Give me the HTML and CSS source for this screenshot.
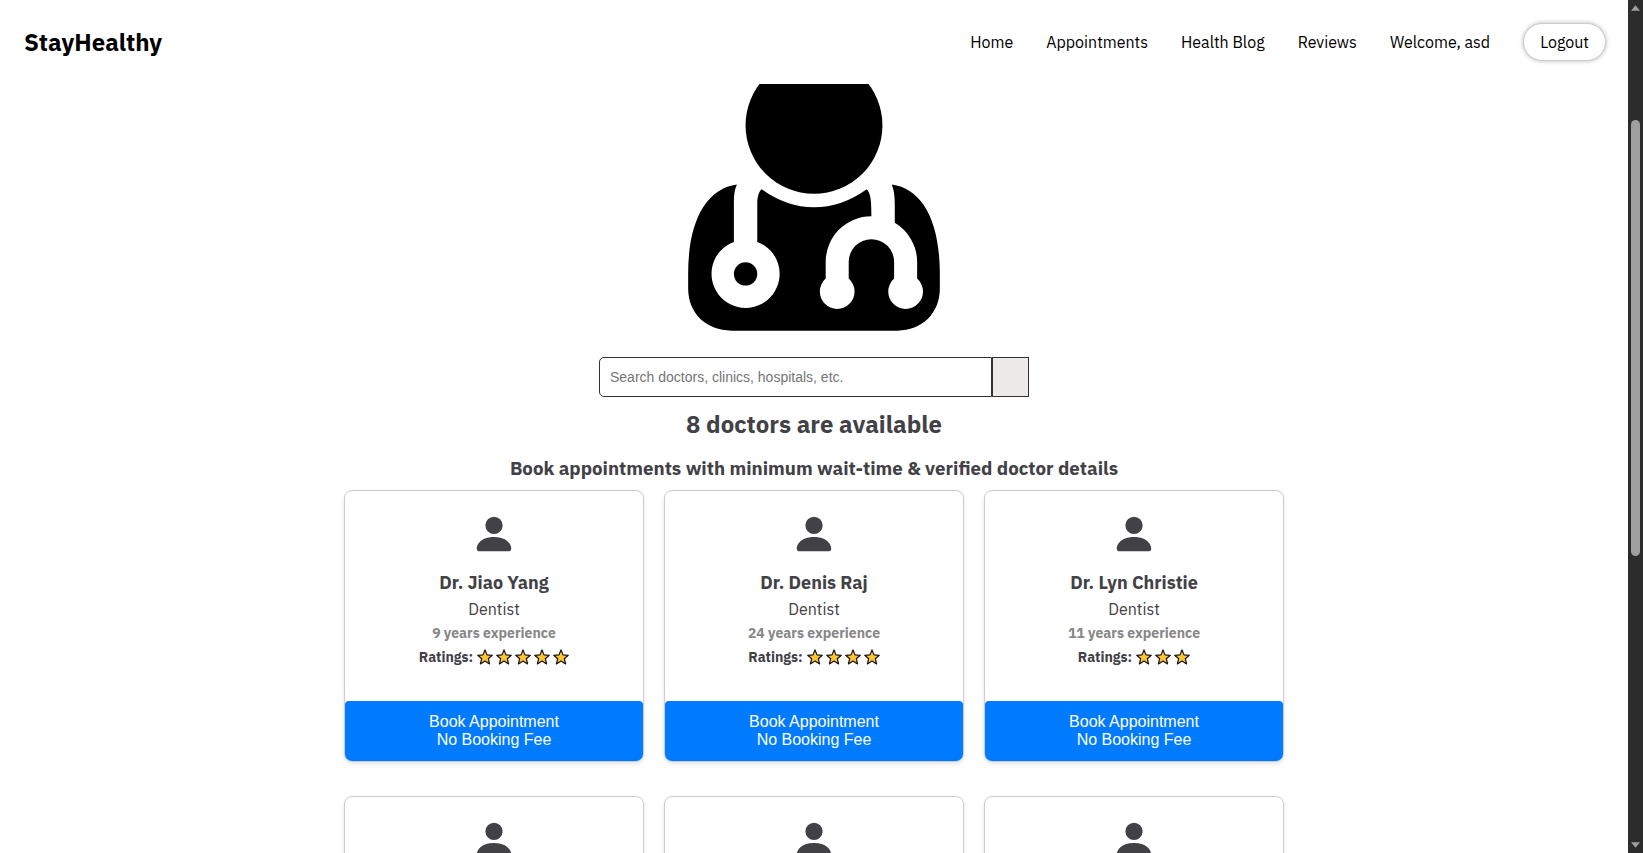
FILE: index.html
```html
<!DOCTYPE html>
<html lang="en">
<head>
<meta charset="utf-8">
<title>StayHealthy</title>
<link rel="stylesheet" href="styles.css">
</head>
<body>
<svg class="defs" aria-hidden="true">
  <symbol id="person" viewBox="0 0 16 16"><path d="M3 14s-1 0-1-1 1-4 6-4 6 3 6 4-1 1-1 1zm5-6a3 3 0 1 0 0-6 3 3 0 0 0 0 6"/></symbol>
  <symbol id="star" viewBox="0 0 16 16"><path d="M8 .9 10 5.900l5.300.400-4 3.400 1.300 5.200L8 12.100l-4.600 2.800 1.300-5.200-4-3.400L6 5.900z" fill="#ffc532" stroke="#111" stroke-width="1.200" stroke-linejoin="round"/></symbol>
</svg>
<div class="page">
  <header class="header">
    <a class="logo" href="#">StayHealthy</a>
    <nav class="nav">
      <a href="#">Home</a>
      <a href="#">Appointments</a>
      <a href="#">Health Blog</a>
      <a href="#">Reviews</a>
      <span>Welcome, asd</span>
      <button class="logout" type="button">Logout</button>
    </nav>
  </header>
  <main class="main">
    <svg class="doctor" viewBox="85 42 754 740" role="img" aria-label="Doctor">
      <circle cx="462" cy="166" r="205"/>
      <path d="M695 343C785 355 839 450 839 610V655C839 730 785 781 712 781H215C140 781 85 730 85 655V610C85 450 141 355 231 343C223 360 222 380 222 405V515A102 102 0 1 0 292 515V400C292 380 297 363 305 357Q380 411 462 411Q545 411 620 357C631 370 634 385 634 438A137 137 0 0 0 497 575V625A52 52 0 1 0 566 625V575A68 68 0 0 1 702 575V625A52 52 0 1 0 771 625V575A137 137 0 0 0 704 458V405C704 380 702 360 695 343Z"/>
      <circle cx="257" cy="611" r="35"/>
    </svg>
    <form class="search">
      <input class="search-input" type="text" aria-label="Search doctors" placeholder="Search doctors, clinics, hospitals, etc.">
      <button class="search-button" type="button" aria-label="Search"></button>
    </form>
    <h2 class="count">8 doctors are available</h2>
    <h3 class="tagline">Book appointments with minimum wait-time &amp; verified doctor details</h3>
    <div class="cards">
      <article class="card">
        <svg class="person"><use href="#person"/></svg>
        <h4 class="name">Dr. Jiao Yang</h4>
        <p class="specialty">Dentist</p>
        <p class="experience">9 years experience</p>
        <p class="ratings">Ratings: <span class="stars"><svg><use href="#star"/></svg><svg><use href="#star"/></svg><svg><use href="#star"/></svg><svg><use href="#star"/></svg><svg><use href="#star"/></svg></span></p>
        <button class="book" type="button"><span>Book Appointment</span><span>No Booking Fee</span></button>
      </article>
      <article class="card">
        <svg class="person"><use href="#person"/></svg>
        <h4 class="name">Dr. Denis Raj</h4>
        <p class="specialty">Dentist</p>
        <p class="experience">24 years experience</p>
        <p class="ratings">Ratings: <span class="stars"><svg><use href="#star"/></svg><svg><use href="#star"/></svg><svg><use href="#star"/></svg><svg><use href="#star"/></svg></span></p>
        <button class="book" type="button"><span>Book Appointment</span><span>No Booking Fee</span></button>
      </article>
      <article class="card">
        <svg class="person"><use href="#person"/></svg>
        <h4 class="name">Dr. Lyn Christie</h4>
        <p class="specialty">Dentist</p>
        <p class="experience">11 years experience</p>
        <p class="ratings">Ratings: <span class="stars"><svg><use href="#star"/></svg><svg><use href="#star"/></svg><svg><use href="#star"/></svg></span></p>
        <button class="book" type="button"><span>Book Appointment</span><span>No Booking Fee</span></button>
      </article>
      <article class="card"><svg class="person"><use href="#person"/></svg></article>
      <article class="card"><svg class="person"><use href="#person"/></svg></article>
      <article class="card"><svg class="person"><use href="#person"/></svg></article>
    </div>
  </main>
</div>
<div class="scrollbar" aria-hidden="true">
  <svg class="arrow" viewBox="0 0 10 6"><path d="M5 0 10 6H0z"/></svg>
  <div class="track"><div class="thumb"></div></div>
  <svg class="arrow" viewBox="0 0 10 6"><path d="M0 0h10L5 6z"/></svg>
</div>
</body>
</html>
```
FILE: styles.css
```css
* { box-sizing: border-box; }

body {
  margin: 0;
  height: 100vh;
  overflow: hidden;
  display: flex;
  background: #fff;
  color: #414146;
  font-family: "IBM Plex Sans", "Open Sans", sans-serif;
  font-size: 16px;
}

h2, h3, h4, p { margin: 0; }

.defs { position: absolute; width: 0; height: 0; }

.page {
  flex: 1;
  min-width: 0;
  display: flex;
  flex-direction: column;
}

.header {
  flex: none;
  display: flex;
  justify-content: space-between;
  align-items: center;
  height: 84px;
  padding: 0 22px 0 24px;
}

.header a { color: #000; text-decoration: none; }

.logo { font-size: 24px; font-weight: 700; }

.nav {
  display: flex;
  align-items: center;
  gap: 33px;
  color: #000;
  line-height: 22px;
}

.logout {
  height: 38px;
  padding: 0 16px;
  border: 1px solid #ccc;
  border-radius: 19px;
  background: #fff;
  box-shadow: 0 0 4px rgba(0, 0, 0, 0.3);
  color: #000;
  font: inherit;
}

.main {
  flex: 1;
  min-height: 0;
  overflow: hidden;
  display: flex;
  flex-direction: column;
  align-items: center;
}

.doctor { flex: none; width: 252px; height: 247px; }

.search {
  flex: none;
  display: flex;
  width: 430px;
  height: 40px;
  margin-top: 26px;
}

.search-input {
  flex: 1;
  min-width: 0;
  padding: 0 10px;
  border: 1px solid #333;
  border-radius: 5px 0 0 5px;
  font: 14px "Liberation Sans", sans-serif;
}

.search-input::placeholder { color: #757575; }

.search-button {
  width: 37px;
  padding: 0;
  border: 1px solid #333;
  background: #eee9e9;
}

.count {
  margin-top: 11px;
  font-size: 24px;
  line-height: 32px;
}

.tagline {
  margin: 16px 0 10px;
  line-height: 24px;
}

.cards {
  display: grid;
  grid-template-columns: repeat(3, 300px);
  gap: 34px 20px;
}

.card {
  display: flex;
  flex-direction: column;
  align-items: center;
  min-height: 272px;
  padding-top: 20px;
  border: 1px solid #ccc;
  border-radius: 8px;
  box-shadow: 0 2px 4px rgba(0, 0, 0, 0.1);
}

.person { width: 46px; height: 46px; fill: #414146; }

.name {
  margin-top: 14px;
  font-size: 18px;
  line-height: 24px;
}

.specialty { margin-top: 2px; line-height: 24px; }

.experience {
  font-size: 14px;
  line-height: 24px;
  font-weight: 700;
  color: #888;
}

.ratings {
  display: flex;
  gap: 4px;
  font-size: 14px;
  line-height: 24px;
  font-weight: 700;
}

.stars { display: flex; align-items: center; gap: 3px; }
.stars svg { width: 16px; height: 16px; }

.book {
  display: flex;
  flex-direction: column;
  align-items: center;
  justify-content: center;
  width: 100%;
  height: 60px;
  margin-top: auto;
  border: 0;
  border-radius: 4px 4px 7px 7px;
  background: #007bff;
  color: #fff;
  font: 16px/18px "Liberation Sans", sans-serif;
}

.scrollbar {
  flex: none;
  display: flex;
  flex-direction: column;
  align-items: center;
  gap: 6px;
  width: 15px;
  padding: 5px 0;
  background: #2c2c2c;
}

.arrow { width: 9px; height: 6px; fill: #9f9f9f; }

.track {
  flex: 1;
  width: 9px;
}

.track::before { content: ""; display: block; height: 12.6%; }

.thumb {
  height: 53.2%;
  border-radius: 5px;
  background: #9f9f9f;
}
```
